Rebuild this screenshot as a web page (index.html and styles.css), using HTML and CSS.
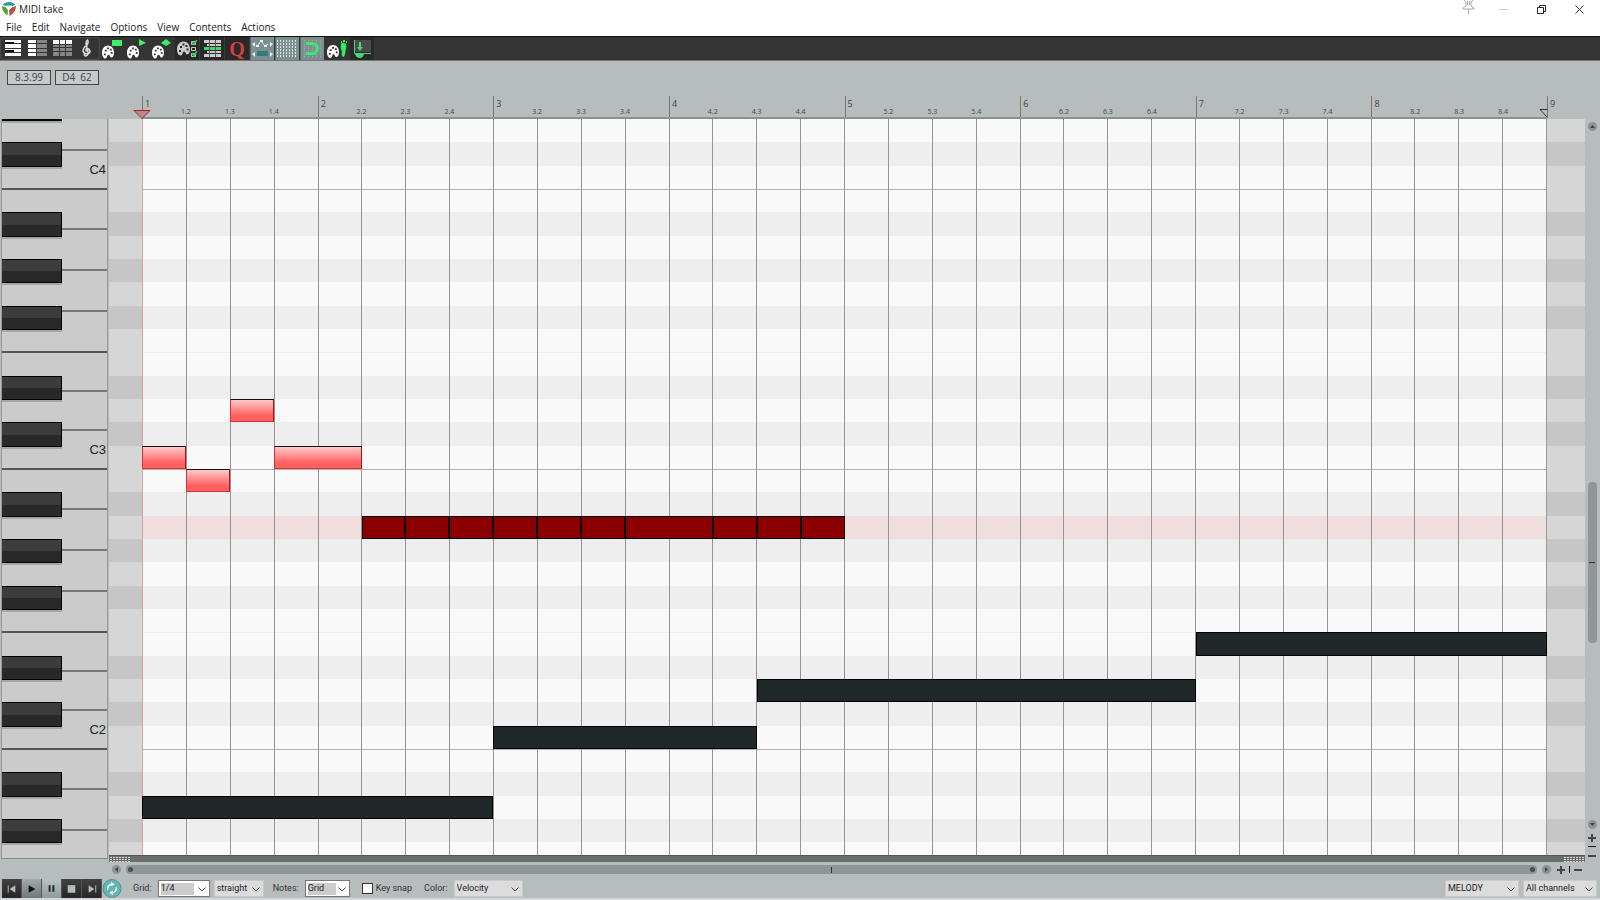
FILE: index.html
```
<!DOCTYPE html>
<html lang="en">
<head>
	<meta charset="utf-8">
	<title>MIDI take</title>
	<link rel="stylesheet" href="styles.css">
	<script src="script.js" defer></script>
</head>
<body>
	<svg class="defs" aria-hidden="true">
		<symbol id="palette" viewBox="0 0 13 14">
			<path fill="currentColor" fill-rule="evenodd" d="M6.5 0C10 0 13 3 13 7.500c0 3-1 5.500-3 5.500-1.500 0-1-3-3-3-2 0-.8 4-3.500 4C1.500 14 0 11 0 8c0-5 3-8 6.500-8zM3 4.500v2h2v-2zM5.500 2v2h2V2zM8.500 3.500v2h2v-2zM9.500 7v2h2V7zM2 8.500v2h2v-2z"/>
		</symbol>
		<symbol id="chevron" viewBox="0 0 8 5">
			<path fill="none" stroke="#444" d="M.5.5 4 4 7.500.5"/>
		</symbol>
	</svg>

	<header class="titleBar">
		<svg class="logo" width="14" height="14" viewBox="0 0 14 14">
			<path fill="#2a9a94" d="M.5 3Q3 0 7 0t6.500 3l-3 1L7 4.500 3.500 4z"/>
			<path fill="#4fa435" d="M0 4q0 6 5.500 9.500L6 8 3 4.500z"/>
			<path fill="#b5504b" d="M14 4q0 6-6.500 10L7 8l4-3.500z"/>
			<path fill="none" stroke="#fff" d="m.5 3.500 3 1 3 3.500v5.500M6.500 8l4-3.500 3-1"/>
			<path fill="#e6eeee" d="M4 3.500h6L7 7z"/>
		</svg>
		<h1>MIDI take</h1>
		<div class="windowBtns">
			<button type="button" aria-label="Pin"><svg width="13" height="14" viewBox="0 0 13 14"><path fill="none" stroke="#aaa" d="M2 0l2 2v4L1 8v1h11V8L9 6V2l2-2M5.500 1v4M7.500 1v4M6.500 9v5"/></svg></button>
			<button type="button" aria-label="Minimize"><svg width="9" height="9" viewBox="0 0 9 9"><path stroke="#ccc" d="M0 4.500h9"/></svg></button>
			<button type="button" aria-label="Restore"><svg width="9" height="9" viewBox="0 0 9 9"><path fill="none" stroke="#222" d="M.5 2.500h6v6h-6zM2.500 2.500v-2h6v6h-2"/></svg></button>
			<button type="button" aria-label="Close"><svg width="9" height="9" viewBox="0 0 9 9"><path stroke="#333" d="m.5.5 8 8M8.500.5l-8 8"/></svg></button>
		</div>
	</header>

	<nav class="menuBar">
		<button type="button">File</button>
		<button type="button">Edit</button>
		<button type="button">Navigate</button>
		<button type="button">Options</button>
		<button type="button">View</button>
		<button type="button">Contents</button>
		<button type="button">Actions</button>
	</nav>

	<div class="toolBar">
		<div class="group">
			<button type="button" aria-label="Piano roll view"><svg viewBox="0 0 25 25"><path fill="#fff" d="M5 4h16v3H5zM5 8h16v4H5zM5 13h16v3H5zM5 17h16v3H5z"/><path fill="#111" d="M5 6h9v2H5zM5 14h9v2H5z"/></svg></button>
			<button type="button" aria-label="Named notes view"><svg viewBox="0 0 25 25"><path fill="#fff" d="M3 4h8v3H3zM3 8h8v4H3zM3 13h8v3H3zM3 17h8v3H3z"/><path fill="#858585" d="M12 4h10v3H12zM12 8h10v4H12zM12 13h10v3H12zM12 17h10v3H12z"/></svg></button>
			<button type="button" aria-label="Event list view"><svg viewBox="0 0 25 25"><path fill="#fff" d="M3 4h6v4H3zM10 4h5v4h-5zM16 4h6v4h-6z"/><path fill="#858585" d="M3 9h6v2H3zM10 9h5v2h-5zM16 9h6v2h-6zM3 12h6v3H3zM10 12h5v3h-5zM16 12h6v3h-6zM3 16h6v4H3zM10 16h5v4h-5zM16 16h6v4h-6z"/></svg></button>
			<button type="button" aria-label="Notation view"><svg viewBox="0 0 25 25"><path fill="none" stroke="#ddd" stroke-width="1.500" d="M9 18q1 3 3 1.500Q14 18 12 12L11 7q0-2 1.500-3Q14 6 12 9q-4 3-4 6 1 3 4 3 3-.5 3-3-1-3-3-2.500-2 1-.5 3"/></svg></button>
		</div>
		<button type="button" aria-label="Color by velocity"><svg viewBox="0 0 25 25"><use href="#palette" x="2" y="9" width="12" height="14"/><path fill="#3df065" d="M12 4h10v6H12z"/></svg></button>
		<button type="button" aria-label="Color by channel"><svg viewBox="0 0 25 25"><use href="#palette" x="2" y="9" width="12" height="14"/><path fill="#3df065" d="m14 3 7 4-7 3z"/></svg></button>
		<button type="button" aria-label="Color by pitch"><svg viewBox="0 0 25 25"><use href="#palette" x="2" y="9" width="12" height="14"/><path fill="#3df065" d="m16 3 5 4-5 3-5-3z"/></svg></button>
		<button type="button" class="dark" aria-label="Color options"><svg viewBox="0 0 25 25" color="#ccc"><use href="#palette" x="2" y="4" width="13" height="17"/><path fill="none" stroke="#ccc" d="M16.500 5.500h4v3h-4zM16.500 11.500h4v3h-4zM16.500 17.500h4v3h-4z"/><path fill="none" stroke="#28d050" stroke-width="1.500" d="m17 6 2 2 3-4M17 17l2 3 3-5"/></svg></button>
		<button type="button" class="dark" aria-label="Filter events"><svg viewBox="0 0 25 25"><path fill="#ccc" d="M4 4h17v3H4zM7 8h14v2H7zM7 15h14v2H7zM4 18h17v3H4z"/><path fill="#40d868" d="M4 11h17v3H4z"/><path stroke="#555" d="M9.500 4v17M15.500 4v17"/></svg></button>
		<button type="button" class="dark quantize">Q</button>
		<button type="button" class="on" aria-label="CC lanes"><svg viewBox="0 0 25 25"><path fill="#e8eeee" d="m2 8 3-2v5zM23 8l-3-2v5zM2 18l3-2v5zM23 18l-3-2v5z"/><path fill="none" stroke="#e8eeee" d="m7 10 4-5 4 5 3-2"/><path fill="#e8eeee" d="M6 9h3v2H6zM10 4h3v2h-3zM14 9h3v2h-3z"/><path fill="#347a7c" d="M7 15h11v5H7z"/></svg></button>
		<button type="button" class="on" aria-label="Grid"><svg viewBox="0 0 25 25"><path stroke="#dce4e4" stroke-dasharray="2 1" d="M2.500 4v17M5.500 4v17M8.500 4v17M11.500 4v17M14.500 4v17M17.500 4v17M20.500 4v17"/></svg></button>
		<button type="button" class="on" aria-label="Snap"><svg viewBox="0 0 25 25"><path stroke="#9cabab" stroke-dasharray="1 1" d="M4.500 4v17M8.500 4v17M12.500 4v17M16.500 4v17M20.500 4v17"/><path fill="none" stroke="#3fe873" stroke-width="3" d="M6 7.500h6c7 0 7 10 0 10H6"/></svg></button>
		<button type="button" aria-label="Step input colors"><svg viewBox="0 0 25 25"><use href="#palette" x="2" y="9" width="12" height="13"/><path fill="#30ef5f" d="M16 8q2-3 5 0 1 3-.5 7-.5 6-2.500 6-2-1-1-5-2-4-1-8z"/><path fill="#30ef5f" d="M16 5h1v2h-1zM18 4h2v2h-2zM21 5h1v2h-1z"/></svg></button>
		<button type="button" class="dark" aria-label="Dock editor"><svg viewBox="0 0 25 25"><path fill="#4a4a4a" d="M5 4h16v12H5z"/><path fill="none" stroke="#45d870" d="M4.500 4v13.500H21"/><path fill="#45d870" d="M9 6h2v5h2l-3 4-3-4h2zM5 18h9q-1 4-4 4-4 0-5-4z"/></svg></button>
	</div>

	<main class="editor">
		<div class="readout">
			<output>8.3.99</output>
			<output>D4&nbsp; 62</output>
		</div>

		<div class="ruler">
			<svg class="editCursor" width="18" height="9" viewBox="0 0 18 9"><path fill="#b98a8a" stroke="#a32226" d="M1 .5h16L9 8.500z"/></svg>
			<svg class="loopEnd" width="9" height="9" viewBox="0 0 9 9"><path fill="none" stroke="#333" d="M8.500.5H1l7.500 8"/></svg>
		</div>

		<div class="keyboard"><div class="keys"></div></div>

		<div class="roll">
			<div class="rows"></div>
			<div class="beats"></div>
			<div class="notes"></div>
		</div>

		<div class="laneDivider"><i></i><i></i></div>

		<div class="vScroll">
			<button type="button" class="dot" aria-label="Scroll up"><svg viewBox="0 0 9 9"><path d="M4.500 3 7 6H2z"/></svg></button>
			<div class="vTrack"><span class="thumb"></span></div>
			<button type="button" class="dot" aria-label="Scroll down"><svg viewBox="0 0 9 9"><path d="M4.500 6 7 3H2z"/></svg></button>
			<button type="button" class="zoom" aria-label="Vertical zoom in"><svg viewBox="0 0 8 8"><path d="M3 0h2v3h3v2H5v3H3V5H0V3h3z"/></svg></button>
			<span class="tick"></span>
			<button type="button" class="zoom out" aria-label="Vertical zoom out"><svg viewBox="0 0 8 8"><path d="M0 3h8v2H0z"/></svg></button>
		</div>

		<div class="hScroll">
			<button type="button" class="dot" aria-label="Scroll left"><svg viewBox="0 0 9 9"><path d="M3 4.500 6 2v5z"/></svg></button>
			<div class="hTrack"><i></i><b></b><i></i></div>
			<button type="button" class="dot" aria-label="Scroll right"><svg viewBox="0 0 9 9"><path d="M6 4.500 3 2v5z"/></svg></button>
			<button type="button" class="zoom" aria-label="Horizontal zoom in"><svg viewBox="0 0 8 8"><path d="M3 0h2v3h3v2H5v3H3V5H0V3h3z"/></svg></button>
			<span class="tick"></span>
			<button type="button" class="zoom" aria-label="Horizontal zoom out"><svg viewBox="0 0 8 8"><path d="M0 3h8v2H0z"/></svg></button>
		</div>
	</main>

	<footer class="statusBar">
		<div class="transport">
			<button type="button" aria-label="Go to start"><svg viewBox="0 0 20 19"><path fill="#b5bcbc" d="M6 6h1v8H6zM14 6v8l-6-4z"/></svg></button>
			<button type="button" class="light" aria-label="Play"><svg viewBox="0 0 20 19"><path fill="#111" d="m7 6 7 4-7 4z"/></svg></button>
			<button type="button" class="lighter" aria-label="Pause"><svg viewBox="0 0 20 19"><path fill="#222" d="M7 6h2v7H7zM11 6h2v7h-2z"/></svg></button>
			<button type="button" aria-label="Stop"><svg viewBox="0 0 20 19"><path fill="#b5bcbc" d="M6 6h8v8H6z"/></svg></button>
			<button type="button" aria-label="Go to end"><svg viewBox="0 0 20 19"><path fill="#b5bcbc" d="M14 6h1v8h-1zM7 6v8l6-4z"/></svg></button>
			<button type="button" class="repeat" aria-label="Repeat"><svg viewBox="0 0 20 20"><circle cx="10" cy="10" r="9.500" fill="#66b2b3" stroke="#4c8f90"/><path fill="none" stroke="#e4f3f3" stroke-width="1.500" d="M5.500 11.500Q5 6 10 5.500M14.500 8.500Q15 14 10 14.500"/><path fill="#e4f3f3" d="m9 3 4 2.500L9 8zM11 17l-4-2.500L11 12z"/></svg></button>
		</div>
		<label for="grid">Grid:</label>
		<span class="select combo w52"><select id="grid"><option>1/4</option></select><svg><use href="#chevron"/></svg></span>
		<span class="select w50"><select aria-label="Grid type"><option>straight</option></select><svg><use href="#chevron"/></svg></span>
		<label for="noteLen">Notes:</label>
		<span class="select combo w45"><select id="noteLen"><option>Grid</option></select><svg><use href="#chevron"/></svg></span>
		<label class="check"><input type="checkbox">Key snap</label>
		<label for="color">Color:</label>
		<span class="select w69"><select id="color"><option>Velocity</option></select><svg><use href="#chevron"/></svg></span>
		<div class="tracks">
			<span class="select w74"><select aria-label="Track"><option>MELODY</option></select><svg><use href="#chevron"/></svg></span>
			<span class="select w74"><select aria-label="Channel"><option>All channels</option></select><svg><use href="#chevron"/></svg></span>
		</div>
	</footer>
</body>
</html>
```
FILE: styles.css
```
* {margin:0; padding:0; box-sizing:border-box;}
body {display:flex; flex-direction:column; height:100vh; overflow:hidden; font-family:"Open Sans", "Noto Sans", sans-serif; font-size:10px; color:#222; background:#b7bdbd;}
button {border:0; background:none; font:inherit; color:inherit;}
svg {display:block;}
.defs {position:absolute; width:0; height:0;}

/* title + menu */
.titleBar {display:flex; align-items:center; gap:3px; padding-left:2px; height:18px; background:#fff;}
.titleBar h1 {font-size:10px; font-weight:normal; line-height:18px;}
.windowBtns {display:flex; margin-left:auto; padding-right:2px; height:18px;}
.windowBtns button {display:flex; justify-content:center; align-items:center; width:38px;}
.windowBtns button:first-child {width:32px; align-items:flex-start;}
.menuBar {display:flex; gap:10px; padding-left:6px; height:18px; background:#fff;}
.menuBar button {line-height:18px;}

/* toolbar */
.toolBar {display:flex; height:25px; border-top:1px solid #111; border-bottom:1px solid #777; background:#353434;}
.toolBar button {width:25px; height:23px; color:#fff;}
.toolBar svg {margin-top:-1px; width:25px; height:25px;}
.toolBar .group {display:flex; border-radius:4px; box-shadow:inset 0 0 0 1px #4b4b4b;}
.toolBar .dark {background:#292929; border-right:1px solid #3a3a3a;}
.toolBar .on {background:#7e8f91; border-right:1px solid #353434; border-left:1px solid #59676a;}
.toolBar .on svg {margin-left:-1px;}
.toolBar .quantize {color:#d43f3f; font:bold 20px/22px "Liberation Serif", serif;}

/* editor */
.editor {flex:1; display:grid; grid-template-columns:109px 1fr 15px; grid-template-rows:35px 23px 1fr 7px 16px; min-height:0;}
.readout {grid-column:1 / 4; display:flex; gap:4px; padding:9px 0 0 7px;}
.readout output {width:44px; height:15px; line-height:13px; text-align:center; border:1px solid #444; background:#c5c9c9; color:#444;}

.ruler {grid-column:2; position:relative; display:grid; grid-template-columns:repeat(32, 1fr) 0; margin:0 38px 0 33px; border-bottom:2px solid #8b9191; font-size:8px; line-height:10px; color:#444;}
.ruler .bar {grid-row:1; padding:3px 0 0 2px; border-left:1px solid #777; font-size:9px; width:20px; height:21px;}
.ruler .beat {grid-row:1; margin-left:-10px; padding-top:11px; width:20px; font-size:7px; text-align:center;}
.editCursor {position:absolute; left:-9px; bottom:-2px;}
.loopEnd {position:absolute; right:-1px; bottom:-1px;}

.keyboard {grid-column:1; grid-row:3 / 5; margin:0 1px 3px 1px; overflow:hidden; border-right:1px solid #999; border-bottom:1px solid #888; border-left:1px solid #999; background:#cbcbcb;}
.keys {display:grid; grid-template-rows:repeat(36, 1fr); grid-template-columns:60px 1fr; height:840px;}
.keys .black {grid-column:1; z-index:1; margin-bottom:-1px; border:1px solid #000; border-left:0; background:linear-gradient(#3c3c3c 52%, #292929 52%); box-shadow:0 2px 0 #a5a5a5;}
.keys .black.cut {height:2px;}
.keys .white {grid-column:1 / 3; display:flex; flex-direction:column; margin-bottom:-1px;}
.keys .white span {flex:1; display:flex; justify-content:flex-end; align-items:center; padding-right:1px; border-bottom:2px solid #777; font:13px "Liberation Sans", sans-serif;}
.keys .white span:last-child {border-color:#555;}

.roll {grid-column:2; grid-row:3; position:relative; overflow:hidden;}
.rows {display:grid; grid-template-rows:repeat(36, 1fr); height:840px;}
.row {border:solid #d6d6d6; border-width:0 38px 0 33px; background:#f9f9f9;}
.row.sharp {border-color:#c6c6c6; background:#eee;}
.row.current {background:#f0dede;}
.row.octave {box-shadow:inset 0 1px 0 #b5b5b5;}
.row.half {box-shadow:inset 0 1px 0 #eee;}
.beats, .notes {position:absolute; top:0; left:33px; right:38px; height:840px; display:grid; grid-template-columns:repeat(32, 1fr);}
.beats {border-right:1px solid #999;}
.beats i {border-left:1px solid #949494;}
.beats i:first-child {border-color:#d3a3a3;}
.notes {grid-template-rows:repeat(36, 1fr);}
.note {border:1px solid #000;}
.note.loud {border-color:#111 #a81515 #d23333 #d23333; background:linear-gradient(#ffc9c9, #ff6060 75%);}
.note.mid {background:#8a0000;}
.note.soft {background:#20282a;}

.laneDivider {grid-column:2; grid-row:4; display:flex; justify-content:space-between; align-items:center; padding:0 1px; background:#686d6d; border-top:1px solid #555;}
.laneDivider i {width:20px; height:5px; background:repeating-linear-gradient(90deg, transparent 0 2px, #666 2px 3px), repeating-linear-gradient(#ddd 0 1px, #666 1px 2px);}

/* scrollbars */
.dot {width:9px; height:9px; border-radius:50%; background:#8d9393;}
.dot svg {width:9px; height:9px; fill:#444;}
.zoom {width:8px; height:8px;}
.zoom svg {width:8px; height:8px; fill:#444;}
.vScroll {grid-column:3; grid-row:3 / 5; display:flex; flex-direction:column; align-items:center; padding:3px 1px 2px 0;}
.vTrack {flex:1; display:flex; flex-direction:column; width:9px; padding-top:351px;}
.thumb {display:flex; height:161px; border-radius:4px; background:linear-gradient(#333 0 0) center / 6px 1px no-repeat #909696;}
.vScroll .zoom {margin-top:5px;}
.vScroll .tick {width:8px; height:1px; margin-top:4px; background:#111;}
.vScroll .out {margin-top:5px;}
.hScroll {grid-column:2 / 4; grid-row:5; display:flex; align-items:center; gap:5px; padding:0 18px 1px 3px;}
.hTrack {flex:1; display:flex; justify-content:space-between; align-items:center; height:9px; padding:0 2px; border-radius:4px; background:#909696;}
.hTrack i {width:5px; height:5px; border-radius:50%; background:#4a4e4e;}
.hTrack b {width:1px; height:6px; background:#333;}
.hScroll .dot + .zoom {margin-left:1px;}
.hScroll .tick {width:1px; height:7px; background:#111; margin:0 -1px;}

/* bottom bar */
.statusBar {display:flex; align-items:center; height:22px; padding:0 3px 0 2px; border-bottom:2px solid #d5d8d8; font-family:Roboto, "Liberation Sans", sans-serif; font-size:9px; color:#333;}
.transport {display:flex; margin-right:11px;}
.transport button {width:20px; height:19px; border-right:1px solid #555; background:linear-gradient(#414141, #262626);}
.transport .light {background:linear-gradient(#a1aaaa, #6f7a7a);}
.transport .lighter {background:linear-gradient(#b8c0c0, #929b9b);}
.transport .repeat {border:0; background:none;}
.transport svg {width:100%; height:100%;}
.statusBar > label {margin-right:6px;}
.select {position:relative; margin-right:4px;}
.select select {appearance:none; display:block; width:100%; height:17px; padding-left:2px; border:1px solid #c9c9c9; border-radius:0; background:#dcdcdc; font:inherit; color:#222;}
.select svg {position:absolute; top:7px; right:4px; width:8px; height:5px; pointer-events:none;}
.select.combo select {border-color:#777; background:linear-gradient(#ccc 0 0) 2px 2px / 66% 12px no-repeat #fff;}
.select.w45 {width:45px; margin-right:12px;}
.select.w50 {width:50px; margin-right:9px;}
.select.w52 {width:52px;}
.select.w69 {width:69px;}
.select.w74 {width:74px;}
.statusBar .check {display:flex; align-items:center; gap:3px; margin-right:12px;}
.check input {appearance:none; width:11px; height:11px; border:1px solid #333; background:#fff;}
.tracks {display:flex; margin-left:auto;}
.tracks .select:last-child {margin-right:0;}
```
FILE: script.js
```
var ROWS = 36;
var BEATS = 32;
// pitch names from the top row (D4) downwards
var names = ["D", "C#", "C", "B", "A#", "A", "G#", "G", "F#", "F", "E", "D#"];
var currentRow = 18;

// [type, row, start beat, length in beats]
var notes = [
	["loud", 15, 1, 1], ["loud", 16, 2, 1], ["loud", 13, 3, 1], ["loud", 15, 4, 2],
	["mid", 18, 6, 1], ["mid", 18, 7, 1], ["mid", 18, 8, 1], ["mid", 18, 9, 1], ["mid", 18, 10, 1],
	["mid", 18, 11, 1], ["mid", 18, 12, 2], ["mid", 18, 14, 1], ["mid", 18, 15, 1], ["mid", 18, 16, 1],
	["soft", 30, 1, 8], ["soft", 27, 9, 6], ["soft", 25, 15, 10], ["soft", 23, 25, 8]
];

function add(parent, tag, cls, text){
	var el = document.createElement(tag);
	if(cls) el.className = cls;
	if(text) el.textContent = text;
	parent.appendChild(el);
	return el;
}

var rowsEl = document.querySelector(".rows");
var keysEl = document.querySelector(".keys");

// white keys: first row, number of rows, number of keys, label on the last key
function addWhite(row, span, count, label){
	var el = add(keysEl, "div", "white");
	el.style.gridRow = row + " / span " + span;
	for (var i = 0; i < count; i++) {
		add(el, "span", "", i == count - 1 ? label : "");
	}
}

for (var r = 1; r <= ROWS; r++) {
	var name = names[(r - 1) % 12];
	var cls = "row";
	if(name.indexOf("#") != -1){
		cls += " sharp";
		add(keysEl, "div", "black").style.gridRow = r;
	}
	if(name == "B") cls += " octave";
	if(name == "E") cls += " half";
	if(r == currentRow) cls += " current";
	add(rowsEl, "div", cls);
	if(name == "B" && r <= ROWS - 6){
		addWhite(r, 7, 4, "");
	}
	if(name == "E" && r + 4 <= ROWS){
		addWhite(r, 5, 3, "C" + (r < 12 ? 3 : 2));
	}
}
// the top octave is cut off: the end of D#4, most of D4, then C4
add(keysEl, "div", "black cut").style.gridRow = 1;
var top4 = add(keysEl, "div", "white");
top4.style.gridRow = "1 / span 3";
add(top4, "span").style.flex = "31";
add(top4, "span", "", "C4").style.flex = "39";

var ruler = document.querySelector(".ruler");
var beatsEl = document.querySelector(".beats");
for (var b = 0; b <= BEATS; b++) {
	var bar = Math.floor(b / 4) + 1;
	var label = b % 4 ? add(ruler, "span", "beat", bar + "." + (b % 4 + 1)) : add(ruler, "span", "bar", bar);
	label.style.gridColumn = b + 1;
	if(b < BEATS) add(beatsEl, "i");
}

var notesEl = document.querySelector(".notes");
notes.forEach(function (n){
	var el = add(notesEl, "div", "note " + n[0]);
	el.style.gridRow = n[1];
	el.style.gridColumn = n[2] + " / span " + n[3];
});
```
